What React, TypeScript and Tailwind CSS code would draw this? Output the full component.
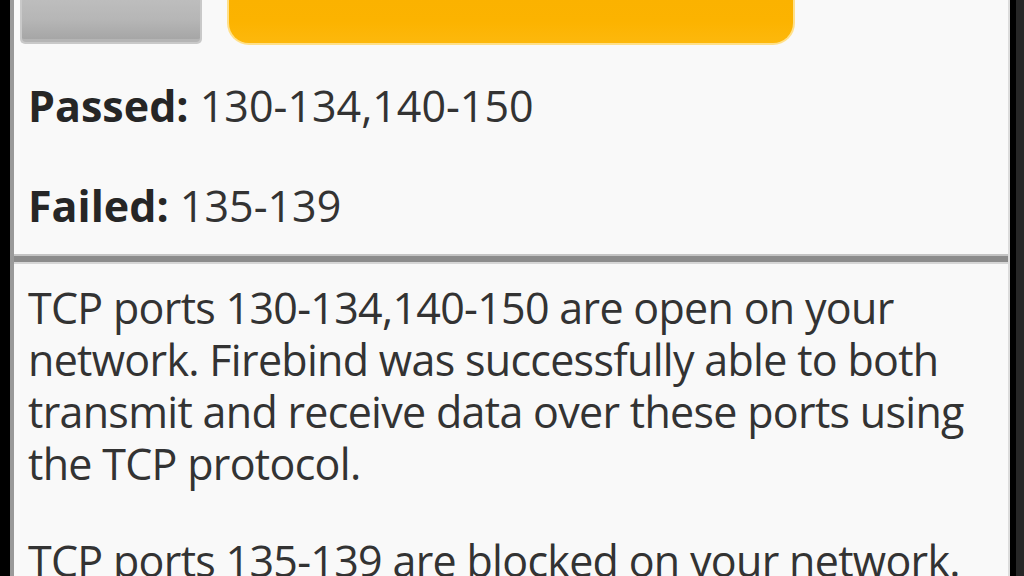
import React from "react";

export default function App() {
  const font = { fontFamily: '"Open Sans", "Noto Sans", "DejaVu Sans", sans-serif' };
  return (
    <div className="w-[1024px] h-[576px] overflow-hidden bg-black flex" style={font}>
      <div className="w-[10px] shrink-0 bg-black" />
      <div className="w-[4px] shrink-0 bg-[#9a9a9a]" />
      <div className="flex-1 bg-[#f9f9f9] flex flex-col text-[#333333] text-[43px] leading-[52px]">
        {/* button row */}
        <div className="flex items-start h-[45px] pl-[6px] gap-[25px]">
          <div className="w-[182px] h-[44px] rounded-b-[5px] bg-[#c9c9c9] p-[2px] pt-0">
            <div className="h-full rounded-b-[4px] bg-gradient-to-b from-[#bdbdbd] via-[#b6b6b6] to-[#a6a6a6] border-b-[3px] border-[#b5b5b5]" />
          </div>
          <div className="w-[568px] h-[45px] rounded-b-[22px] bg-[#ffe08a] p-[2px] pt-0">
            <div className="h-full rounded-b-[20px] bg-gradient-to-b from-[#fbb200] via-[#fcb300] to-[#fdb80c]" />
          </div>
        </div>

        <div className="pl-[14px] mt-[35px] whitespace-nowrap">
          <span className="font-bold text-[#262626]">Passed:</span> 130-134,140-150
        </div>
        <div className="pl-[14px] mt-[48px] whitespace-nowrap">
          <span className="font-bold text-[#262626]">Failed:</span> 135-139
        </div>

        <div className="mt-[22px] h-[10px] flex flex-col">
          <div className="h-[2px] bg-[#c4c4c4]" />
          <div className="h-[6px] bg-[#8c8c8c]" />
          <div className="h-[2px] bg-[#d6d6d6]" />
        </div>

        <div className="pl-[14px] mt-[18px] tracking-[-0.7px]">
          <div className="whitespace-nowrap">TCP ports 130-134,140-150 are open on your</div>
          <div className="whitespace-nowrap">network. Firebind was successfully able to both</div>
          <div className="whitespace-nowrap">transmit and receive data over these ports using</div>
          <div className="whitespace-nowrap">the TCP protocol.</div>
        </div>
        <div className="pl-[14px] mt-[45px] tracking-[-0.7px]">
          <div className="whitespace-nowrap">TCP ports 135-139 are blocked on your network.</div>
        </div>
      </div>
      <div className="w-[2px] shrink-0 bg-[#dcdcdc]" />
      <div className="w-[6px] shrink-0 bg-black" />
      <div className="w-[8px] shrink-0 bg-[#262626]" />
    </div>
  );
}
